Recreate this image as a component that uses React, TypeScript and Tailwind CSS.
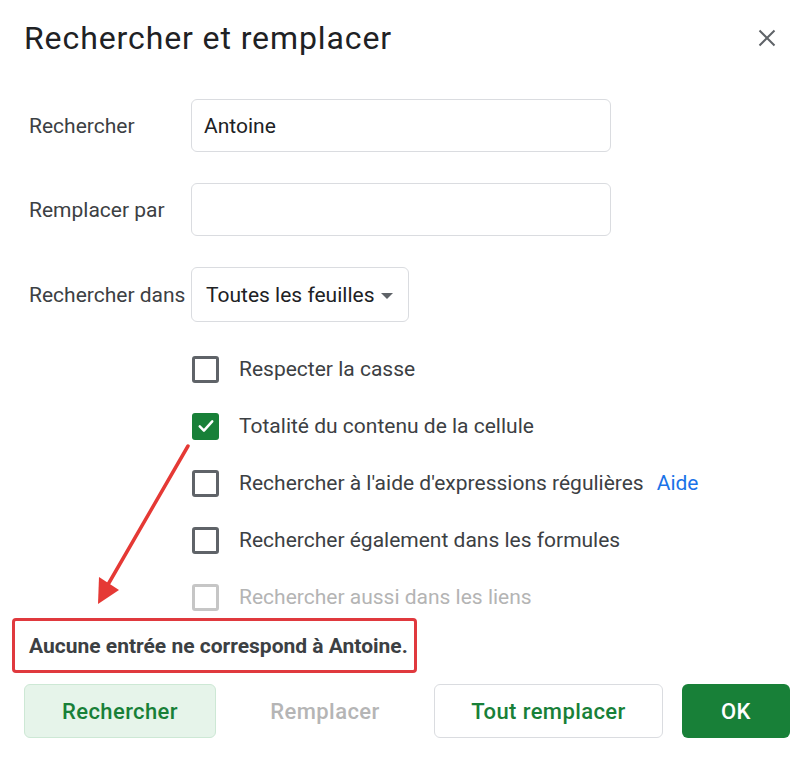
import React from "react";

const font = { fontFamily: "Roboto, 'Liberation Sans', sans-serif" };

function Box({ state }: { state: "off" | "on" | "disabled" }) {
  if (state === "on") {
    return (
      <div className="w-[27px] h-[27px] rounded-[3px] bg-[#188038] flex items-center justify-center shrink-0">
        <svg width="20" height="20" viewBox="0 0 24 24">
          <path d="M4.5 12.5 L9.5 17.5 L19.5 6.5" fill="none" stroke="#ffffff" strokeWidth="3" strokeLinecap="round" strokeLinejoin="round" />
        </svg>
      </div>
    );
  }
  return (
    <div
      className={
        "w-[27px] h-[27px] rounded-[3px] border-[3px] shrink-0 " +
        (state === "disabled" ? "border-[#c6c6c6]" : "border-[#5f6368]")
      }
    />
  );
}

function Row({ state, children }: { state: "off" | "on" | "disabled"; children: React.ReactNode }) {
  return (
    <div className="flex items-center h-[30px] gap-[20px]">
      <Box state={state} />
      <div className={"text-[21px] pt-[2px] whitespace-nowrap " + (state === "disabled" ? "text-[#b4b4b4]" : "text-[#3c4043]")}>{children}</div>
    </div>
  );
}

export default function App() {
  return (
    <div className="w-[809px] h-[759px] bg-white relative overflow-hidden" style={font}>
      <div className="flex items-start justify-between pt-[18px] pl-[24px] pr-[33px]">
        <div className="text-[32px] leading-[40px] tracking-[0.9px] text-[#202124]">Rechercher et remplacer</div>
        <svg width="18" height="18" viewBox="0 0 18 18" className="mt-[11px]">
          <path d="M1.5 1.5 L16.5 16.5 M16.5 1.5 L1.5 16.5" stroke="#5f6368" strokeWidth="2" />
        </svg>
      </div>

      <div className="pl-[29px] mt-[41px] flex flex-col gap-[31px]">
        <div className="flex items-center">
          <div className="w-[162px] pt-[2px] text-[21px] text-[#3c4043]">Rechercher</div>
          <div className="w-[420px] h-[53px] border border-[#dadce0] rounded-[6px] flex items-center pl-[12px] pt-[2px] text-[21px] text-[#202124]">
            Antoine
          </div>
        </div>
        <div className="flex items-center">
          <div className="w-[162px] pt-[2px] text-[21px] text-[#3c4043]">Remplacer par</div>
          <div className="w-[420px] h-[53px] border border-[#dadce0] rounded-[6px]" />
        </div>
        <div className="flex items-center">
          <div className="w-[162px] pt-[2px] text-[21px] text-[#3c4043] whitespace-nowrap">Rechercher dans</div>
          <div className="w-[218px] h-[55px] border border-[#dadce0] rounded-[6px] flex items-center pl-[14px] pt-[2px] text-[21px] text-[#202124]">
            Toutes les feuilles
            <svg width="12" height="6" viewBox="0 0 12 6" className="ml-[7px]">
              <path d="M0 0 L12 0 L6 6 Z" fill="#5f6368" />
            </svg>
          </div>
        </div>
      </div>

      <div className="pl-[192px] mt-[32px] flex flex-col gap-[27px]">
        <Row state="off">Respecter la casse</Row>
        <Row state="on">Totalité du contenu de la cellule</Row>
        <Row state="off">
          Rechercher à l'aide d'expressions régulières
          <span className="text-[#1a73e8] ml-[13px]">Aide</span>
        </Row>
        <Row state="off">Rechercher également dans les formules</Row>
        <Row state="disabled">Rechercher aussi dans les liens</Row>
      </div>

      <div className="ml-[12px] mt-[6px] w-[405px] h-[55px] border-[3px] border-[#e0393e] rounded-[4px] flex items-center pl-[14px] pt-[3px]">
        <span className="text-[21px] font-bold text-[#3c4043] whitespace-nowrap">Aucune entrée ne correspond à Antoine.</span>
      </div>

      <div className="flex items-center gap-[19px] pl-[24px] mt-[11px]">
        <div className="w-[192px] h-[54px] rounded-[6px] bg-[#e6f4ea] border border-[#cde8d5] flex items-center justify-center text-[22px] tracking-[0.4px] font-medium text-[#188038]">
          Rechercher
        </div>
        <div className="w-[180px] h-[54px] flex items-center justify-center text-[22px] tracking-[0.4px] font-medium text-[#b5b5b5]">
          Remplacer
        </div>
        <div className="w-[229px] h-[54px] rounded-[6px] bg-white border border-[#dadce0] flex items-center justify-center text-[22px] tracking-[0.4px] font-medium text-[#188038]">
          Tout remplacer
        </div>
        <div className="w-[108px] h-[54px] rounded-[6px] bg-[#188038] flex items-center justify-center text-[22px] tracking-[0.4px] font-medium text-white">
          OK
        </div>
      </div>

      <svg className="absolute left-0 top-0 pointer-events-none" width="809" height="759">
        <line x1="188" y1="446" x2="106" y2="588" stroke="#e53935" strokeWidth="3.5" strokeLinecap="round" />
        <path d="M98 604 L99 577 L119 590 Z" fill="#e53935" />
      </svg>
    </div>
  );
}
